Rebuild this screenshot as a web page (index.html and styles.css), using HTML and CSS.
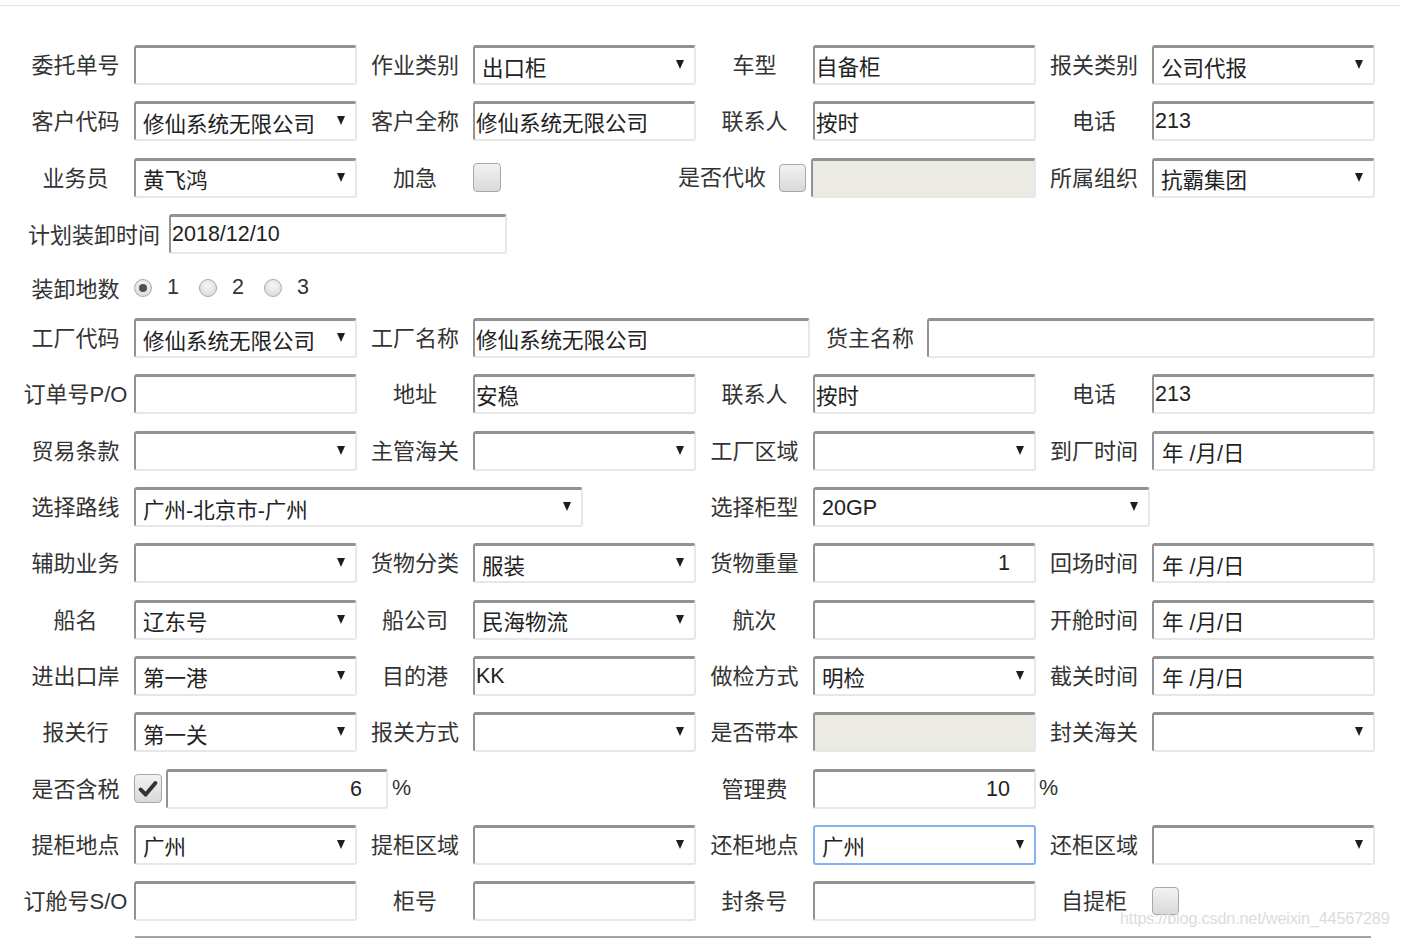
FILE: index.html
```html
<!DOCTYPE html>
<html lang="zh-CN">
<head>
<meta charset="utf-8">
<title>委托单</title>
<link rel="stylesheet" href="styles.css">
</head>
<body>
<div class="page">
  <div class="top-rule"></div>
  <form class="form">
    <div class="row">
      <span class="lb">委托单号</span><input class="tx" type="text" value="">
      <span class="lb">作业类别</span><div class="sel"><span>出口柜</span></div>
      <span class="lb">车型</span><input class="tx" type="text" value="自备柜">
      <span class="lb">报关类别</span><div class="sel"><span>公司代报</span></div>
    </div>
    <div class="row">
      <span class="lb">客户代码</span><div class="sel"><span>修仙系统无限公司</span></div>
      <span class="lb">客户全称</span><input class="tx" type="text" value="修仙系统无限公司">
      <span class="lb">联系人</span><input class="tx" type="text" value="按时">
      <span class="lb">电话</span><input class="tx" type="text" value="213">
    </div>
    <div class="row">
      <span class="lb">业务员</span><div class="sel"><span>黄飞鸿</span></div>
      <span class="lb">加急</span><div class="cellstart"><span class="cb"></span></div>
      <div class="lbcb"><span class="lbtext">是否代收</span><span class="cb cb-sm"></span></div><input class="tx dis shift" type="text" value="" disabled>
      <span class="lb">所属组织</span><div class="sel"><span>抗霸集团</span></div>
    </div>
    <div class="row-flex">
      <span class="lbtext">计划装卸时间</span><input class="tx wide338" type="text" value="2018/12/10">
    </div>
    <div class="row row-radio">
      <span class="lb">装卸地数</span>
      <div class="radios">
        <span class="rd on"></span><span class="rdlabel">1</span>
        <span class="rd"></span><span class="rdlabel">2</span>
        <span class="rd"></span><span class="rdlabel">3</span>
      </div>
    </div>
    <div class="row row-factory">
      <span class="lb">工厂代码</span><div class="sel"><span>修仙系统无限公司</span></div>
      <span class="lb">工厂名称</span><input class="tx w337" type="text" value="修仙系统无限公司">
      <span class="lb">货主名称</span><input class="tx" type="text" value="">
    </div>
    <div class="row">
      <span class="lb">订单号P/O</span><input class="tx" type="text" value="">
      <span class="lb">地址</span><input class="tx" type="text" value="安稳">
      <span class="lb">联系人</span><input class="tx" type="text" value="按时">
      <span class="lb">电话</span><input class="tx" type="text" value="213">
    </div>
    <div class="row">
      <span class="lb">贸易条款</span><div class="sel"><span></span></div>
      <span class="lb">主管海关</span><div class="sel"><span></span></div>
      <span class="lb">工厂区域</span><div class="sel"><span></span></div>
      <span class="lb">到厂时间</span><div class="date">年 /月/日</div>
    </div>
    <div class="row">
      <span class="lb">选择路线</span><div class="sel route"><span>广州-北京市-广州</span></div>
      <span class="lb">选择柜型</span><div class="sel span2"><span>20GP</span></div>
    </div>
    <div class="row">
      <span class="lb">辅助业务</span><div class="sel"><span></span></div>
      <span class="lb">货物分类</span><div class="sel"><span>服装</span></div>
      <span class="lb">货物重量</span><input class="tx num" type="text" value="1">
      <span class="lb">回场时间</span><div class="date">年 /月/日</div>
    </div>
    <div class="row">
      <span class="lb">船名</span><div class="sel"><span>辽东号</span></div>
      <span class="lb">船公司</span><div class="sel"><span>民海物流</span></div>
      <span class="lb">航次</span><input class="tx" type="text" value="">
      <span class="lb">开舱时间</span><div class="date">年 /月/日</div>
    </div>
    <div class="row">
      <span class="lb">进出口岸</span><div class="sel"><span>第一港</span></div>
      <span class="lb">目的港</span><input class="tx" type="text" value="KK">
      <span class="lb">做检方式</span><div class="sel"><span>明检</span></div>
      <span class="lb">截关时间</span><div class="date">年 /月/日</div>
    </div>
    <div class="row">
      <span class="lb">报关行</span><div class="sel"><span>第一关</span></div>
      <span class="lb">报关方式</span><div class="sel"><span></span></div>
      <span class="lb">是否带本</span><input class="tx dis" type="text" value="" disabled>
      <span class="lb">封关海关</span><div class="sel"><span></span></div>
    </div>
    <div class="row">
      <span class="lb">是否含税</span>
      <div class="taxcell">
        <span class="cb on"><svg viewBox="0 0 28 28" width="26" height="26"><path d="M6 14.5 L11.5 20 L22 7.5" fill="none" stroke="#333" stroke-width="4.2" stroke-linecap="round" stroke-linejoin="round"/></svg></span>
        <input class="tx num w222" type="text" value="6"><span class="pct">%</span>
      </div>
      <span class="lb">管理费</span>
      <div class="feecell"><input class="tx num" type="text" value="10"><span class="pct">%</span></div>
    </div>
    <div class="row">
      <span class="lb">提柜地点</span><div class="sel"><span>广州</span></div>
      <span class="lb">提柜区域</span><div class="sel"><span></span></div>
      <span class="lb">还柜地点</span><div class="sel focus"><span>广州</span></div>
      <span class="lb">还柜区域</span><div class="sel"><span></span></div>
    </div>
    <div class="row">
      <span class="lb">订舱号S/O</span><input class="tx" type="text" value="">
      <span class="lb">柜号</span><input class="tx" type="text" value="">
      <span class="lb">封条号</span><input class="tx" type="text" value="">
      <span class="lb">自提柜</span><div class="cellstart"><span class="cb cb-sm"></span></div>
    </div>
  </form>
  <div class="bottom-rule"></div>
  <div class="watermark">https://blog.csdn.net/weixin_44567289</div>
</div>
</body>
</html>
```

FILE: styles.css
```css
html, body {
  margin: 0;
  padding: 0;
  background: #fff;
}

body {
  font-family: "Liberation Sans", "Noto Sans CJK SC", sans-serif;
  color: #333;
}

.page {
  position: relative;
  width: 1401px;
  height: 938px;
  overflow: hidden;
}

.top-rule {
  margin-top: 5px;
  border-top: 1px solid #e4e4e4;
}

.form {
  padding: 31px 0 0 17px;
}

.row {
  display: grid;
  grid-template-columns: 117px 223px 116px 223px 117px 223px 116px 223px;
  height: 56.3px;
  align-items: center;
}

.row-factory {
  grid-template-columns: 117px 223px 116px 340px 114px 448px;
}

.row-radio {
  height: 47.8px;
}

.row-flex {
  display: flex;
  align-items: center;
  height: 56.3px;
  padding-left: 11px;
  gap: 9px;
}

.lb,
.lbtext {
  font-size: 22px;
  line-height: 1;
  color: #333;
  white-space: nowrap;
  padding-top: 2px;
}

.lb {
  text-align: center;
}

.tx,
.sel,
.date {
  box-sizing: border-box;
  height: 40px;
  width: 100%;
  margin: 0;
  border: 2px solid;
  border-color: #929292 #e7e7e7 #e7e7e7 #929292;
  border-top-width: 3px;
  border-radius: 3px;
  background: #fff;
  font-family: "Liberation Sans", "Noto Sans CJK SC", sans-serif;
  font-size: 21.5px;
  color: #222;
}

.tx {
  padding: 0 1px;
  outline: none;
}

.tx.dis {
  background: #ebebe4;
}

.tx.shift {
  width: calc(100% + 2px);
  margin-left: -2px;
}

.tx.num {
  text-align: right;
  padding-right: 24px;
}

.sel {
  position: relative;
  display: flex;
  align-items: center;
  padding: 1px 0 0 7px;
  white-space: nowrap;
}

.sel::after {
  content: "";
  position: absolute;
  right: 10px;
  top: 12px;
  width: 0;
  height: 0;
  border-left: 4.5px solid transparent;
  border-right: 4.5px solid transparent;
  border-top: 9px solid #1e1e1e;
}

.sel.focus {
  border-color: #86b0ee;
  border-top-width: 2px;
}

.sel.focus::after {
  top: 13px;
}

.sel.route {
  grid-column: span 3;
  width: 449px;
  justify-self: start;
}

.sel.span2 {
  grid-column: span 2;
  width: 337px;
  justify-self: start;
}

.date {
  display: flex;
  align-items: center;
  padding: 1px 0 0 8px;
}

.w337 {
  width: 337px;
}

.wide338 {
  width: 338px;
}

.cellstart {
  display: flex;
  align-items: center;
}

.cb {
  box-sizing: border-box;
  display: inline-flex;
  align-items: center;
  justify-content: center;
  width: 28px;
  height: 29px;
  border: 1px solid #a8a8a8;
  border-radius: 4px;
  background: linear-gradient(#f2f2f2, #d9d9d9);
  flex: none;
}

.cb-sm {
  width: 27px;
  height: 28px;
}

.lbcb {
  display: flex;
  align-items: center;
  justify-content: flex-end;
  gap: 13px;
  padding-right: 7px;
  min-width: 0;
}

.lbcb .lbtext {
  padding-top: 0;
}

.row-flex .lbtext {
  padding-top: 3px;
}

.radios {
  display: flex;
  align-items: center;
  padding-top: 4px;
}

.rd {
  box-sizing: border-box;
  width: 18px;
  height: 18px;
  border-radius: 50%;
  border: 1px solid #a9a9a9;
  background: radial-gradient(circle at 50% 35%, #f6f6f6, #d5d5d5);
  margin-right: 15px;
  display: inline-flex;
  align-items: center;
  justify-content: center;
}

.rd.on::after {
  content: "";
  width: 8px;
  height: 8px;
  border-radius: 50%;
  background: #4f4f4f;
}

.rdlabel {
  font-size: 21.5px;
  line-height: 1;
  color: #333;
  margin-right: 20px;
}

.row-radio .lb {
  padding-top: 8px;
}

.taxcell {
  grid-column: span 3;
  display: flex;
  align-items: center;
  gap: 4px;
}

.taxcell .pct {
  margin-left: 0;
}

.w222 {
  width: 222px;
  padding-right: 25px;
}

.taxcell .tx {
  flex: none;
}

.feecell {
  grid-column: span 2;
  display: flex;
  align-items: center;
}

.feecell .tx {
  width: 223px;
  flex: none;
}

.pct {
  font-size: 21.5px;
  line-height: 1;
  color: #333;
  margin-left: 3px;
}

.bottom-rule {
  margin: 7px 0 0 135px;
  width: 1236px;
  border-top: 2px solid #a3a3a3;
}

.watermark {
  position: absolute;
  left: 1120px;
  top: 909px;
  font-family: "Liberation Sans", sans-serif;
  font-size: 16.3px;
  color: #dcdcdc;
  white-space: nowrap;
  letter-spacing: -0.2px;
}
```
